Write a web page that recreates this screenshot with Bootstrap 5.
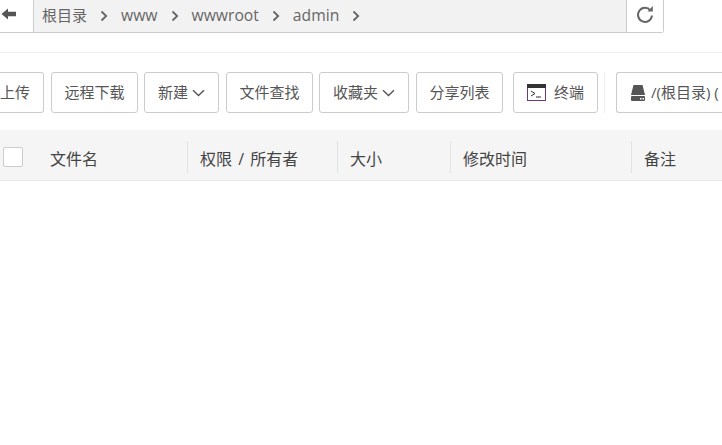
<!DOCTYPE html>
<html lang="zh">
<head>
<meta charset="utf-8">
<title>文件管理</title>
<link rel="stylesheet" href="https://cdn.jsdelivr.net/npm/bootstrap@5.3.0/dist/css/bootstrap.min.css">
<style>
html,body{height:100%;overflow:hidden;background:#fff}
body{font-family:"Open Sans","Noto Sans CJK SC",sans-serif;color:#555;font-size:15px}
.fm-pathbar{height:33px;width:664px;border:1px solid #ccc;border-width:0 1px 1px 0;border-bottom-right-radius:3px}
.fm-back{width:34px;border-right:1px solid #ccc;background:#fff}
.fm-crumbs{background:#f2f2f2;padding:0 0 1px 8px;gap:11px;font-size:15px;color:#666;line-height:1}
.fm-crumbs svg{width:8px;height:12px;margin:0 2px}
.fm-lat{font-size:15.7px}
.fm-refresh{width:37px;border-left:1px solid #ccc;background:#fff}
.fm-rule{height:20px;border-bottom:1px solid #eee;width:100%}
.fm-tools{margin:19px 0 17px;height:41px;white-space:nowrap}
.fm-btn{height:41px;border:1px solid #ccc;border-radius:3px;background:#fff;color:#555;font-size:15px;padding:0;display:flex;align-items:center;justify-content:center;flex:none}
.w-up{width:44px;margin-right:7px;border-left:0;border-radius:0 3px 3px 0;justify-content:flex-start}
.w-a{width:87px;margin-right:6px}
.w-b{width:75px;margin-right:7px}
.w-c{width:87px;margin-right:6px}
.w-d{width:90px;margin-right:7px}
.w-e{width:87px;margin-right:10px}
.w-f{width:85px;margin-right:6px}
.w-g{flex:1 1 0;min-width:0;overflow:hidden;justify-content:flex-start;padding-left:13px;border-right:0;border-radius:3px 0 0 3px}
.fm-vr{width:1px;height:41px;background:#eee;margin-right:11px;flex:none}
.fm-head{height:51px;background:#f5f5f5;border-bottom:1px solid #e6e6e6;font-size:16px;color:#444}
.fm-cell{height:32px;margin-top:11px;border-right:1px solid #e3e3e3;padding:4px 0 0 12px;display:flex;align-items:center;flex:none;line-height:1}
.fm-check{width:20px;height:20px;border:1px solid #ccc;border-radius:2px;background:#fff;flex:none;margin:-4px 27px 0 3px}
.c1{width:188px;padding-left:0}
.c2{width:150px;word-spacing:2px}
.c3{width:113px}
.c4{width:181px}
.c5{border:0}
.fm-caret{width:13px;height:8px;margin-left:4px}
.fm-term{margin-right:8px}
.fm-disk{margin-right:5px}
</style>
</head>
<body>
<div class="fm-pathbar d-flex">
  <div class="fm-back d-flex align-items-center justify-content-center">
    <svg width="17" height="14" viewBox="0 0 17 14" class="me-3 mb-1"><path d="M8 1.500 1.500 7 8 12.500V9.200h8V4.800H8z" fill="#555"/></svg>
  </div>
  <div class="fm-crumbs flex-grow-1 d-flex align-items-center">
    <span>根目录</span>
    <svg viewBox="0 0 8 12"><path d="M1.500 1.500 6.200 6l-4.700 4.500" fill="none" stroke="#666" stroke-width="1.800"/></svg>
    <span class="fm-lat">www</span>
    <svg viewBox="0 0 8 12"><path d="M1.500 1.500 6.200 6l-4.700 4.500" fill="none" stroke="#666" stroke-width="1.800"/></svg>
    <span class="fm-lat">wwwroot</span>
    <svg viewBox="0 0 8 12"><path d="M1.500 1.500 6.200 6l-4.700 4.500" fill="none" stroke="#666" stroke-width="1.800"/></svg>
    <span class="fm-lat">admin</span>
    <svg viewBox="0 0 8 12"><path d="M1.500 1.500 6.200 6l-4.700 4.500" fill="none" stroke="#666" stroke-width="1.800"/></svg>
  </div>
  <div class="fm-refresh d-flex align-items-center justify-content-center">
    <svg width="18" height="19" viewBox="0 0 18 19" class="mb-1"><path d="M14.500 5.500A7 7 0 1 0 16 10.500" fill="none" stroke="#666" stroke-width="2"/><path d="M11.500 6.500h5.300V1z" fill="#666"/></svg>
  </div>
</div>
<div class="fm-rule"></div>
<div class="fm-tools d-flex">
  <div class="fm-btn w-up">上传</div>
  <div class="fm-btn w-a">远程下载</div>
  <div class="fm-btn w-b">新建<svg class="fm-caret" viewBox="0 0 13 8"><path d="M1 1.200 6.500 6.500 12 1.200" fill="none" stroke="#555" stroke-width="1.400"/></svg></div>
  <div class="fm-btn w-c">文件查找</div>
  <div class="fm-btn w-d">收藏夹<svg class="fm-caret" viewBox="0 0 13 8"><path d="M1 1.200 6.500 6.500 12 1.200" fill="none" stroke="#555" stroke-width="1.400"/></svg></div>
  <div class="fm-btn w-e">分享列表</div>
  <div class="fm-btn w-f">
    <svg width="19" height="17" viewBox="0 0 19 17" class="fm-term"><rect x=".5" y=".5" width="18" height="16" fill="#fff" stroke="#6b3a7e"/><rect x="0" y="0" width="19" height="4" fill="#333"/><path d="M4 7l4 2.500-4 2.500" fill="none" stroke="#333"/><path d="M9 13h5" stroke="#333"/></svg>
    <span>终端</span>
  </div>
  <div class="fm-vr"></div>
  <div class="fm-btn w-g">
    <svg width="16" height="16" viewBox="0 0 16 16" class="fm-disk"><path d="M3.500 0h9L15 10H1z" fill="#555"/><rect x="1" y="11" width="14" height="5" rx="1" fill="#555"/><rect x="10" y="13" width="1.500" height="1.500" fill="#fff"/><rect x="12.500" y="13" width="1.500" height="1.500" fill="#fff"/></svg>
    <span>/(根目录) (</span>
  </div>
</div>
<div class="fm-head d-flex">
  <div class="fm-cell c1"><span class="fm-check"></span><span>文件名</span></div>
  <div class="fm-cell c2">权限 / 所有者</div>
  <div class="fm-cell c3">大小</div>
  <div class="fm-cell c4">修改时间</div>
  <div class="fm-cell c5">备注</div>
</div>
</body>
</html>
